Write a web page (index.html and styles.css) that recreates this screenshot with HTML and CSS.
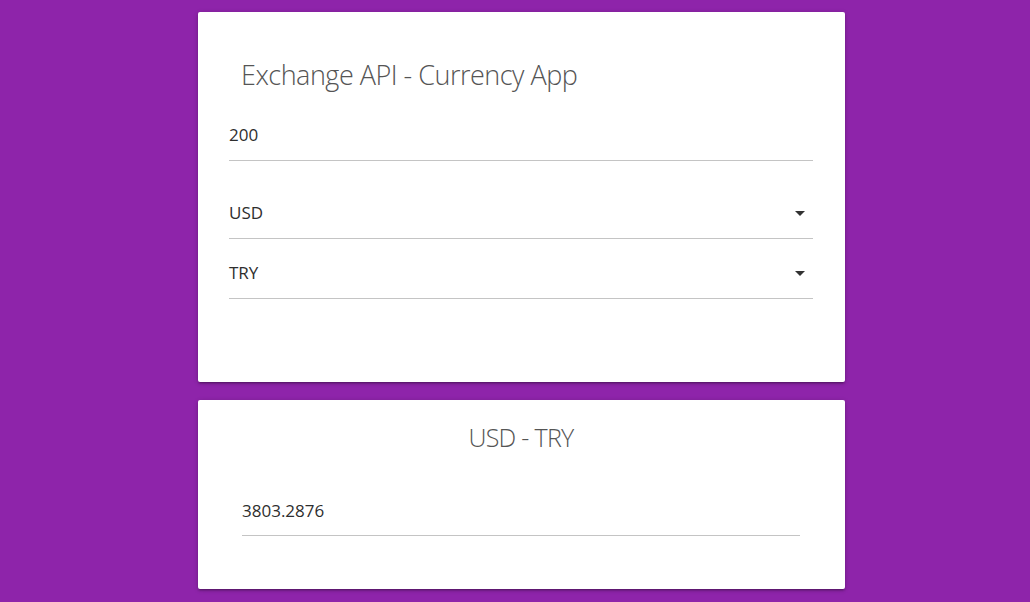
FILE: index.html
```html
<!DOCTYPE html>
<html lang="en">
<head>
<meta charset="utf-8">
<title>Exchange API - Currency App</title>
<link rel="stylesheet" href="styles.css">
</head>
<body>
<main class="page">
  <section class="card card-form">
    <h1 class="card-title">Exchange API - Currency App</h1>
    <div class="field field-amount"><span class="field-value">200</span></div>
    <div class="field field-select field-from"><span class="field-value">USD</span><span class="caret"></span></div>
    <div class="field field-select field-to"><span class="field-value">TRY</span><span class="caret"></span></div>
  </section>
  <section class="card card-result">
    <h2 class="result-title">USD - TRY</h2>
    <div class="field field-result"><span class="field-value">3803.2876</span></div>
  </section>
</main>
</body>
</html>
```
FILE: styles.css
```css
html, body {
  margin: 0;
  padding: 0;
}
body {
  background: #8e24aa;
  font-family: "Open Sans", "Noto Sans", "DejaVu Sans", sans-serif;
  color: #333;
  min-height: 602px;
}
.page {
  width: 647px;
  margin: 12px 0 0 198px;
  display: flex;
  flex-direction: column;
  gap: 18px;
}
.card {
  background: #fff;
  border-radius: 2px;
  box-shadow: 0 2px 2px 0 rgba(0,0,0,0.14), 0 3px 1px -2px rgba(0,0,0,0.12), 0 1px 5px 0 rgba(0,0,0,0.2);
  box-sizing: border-box;
}
.card-form {
  height: 370px;
  padding: 45px 32px 0 31px;
}
.card-title {
  margin: 0 0 30px 12px;
  font-size: 27px;
  line-height: 36px;
  font-weight: 300;
  letter-spacing: -0.5px;
  color: #555;
}
.field {
  display: flex;
  align-items: center;
  justify-content: space-between;
  font-size: 17px;
  line-height: 24px;
  padding-bottom: 13px;
  border-bottom: 1px solid #c4c4c4;
  color: #2e2e2e;
}
.field-from {
  margin-top: 40px;
}
.field-to {
  margin-top: 22px;
}
.caret {
  width: 0;
  height: 0;
  margin-right: 8px;
  border-left: 5px solid transparent;
  border-right: 5px solid transparent;
  border-top: 5px solid #333;
}
.card-result {
  height: 189px;
  padding: 21px 45px 0 44px;
}
.result-title {
  margin: 0 0 46px 0;
  text-align: center;
  font-size: 25px;
  line-height: 32px;
  font-weight: 300;
  letter-spacing: -0.7px;
  color: #555;
}
.field-result {
  padding-bottom: 12px;
}
```
